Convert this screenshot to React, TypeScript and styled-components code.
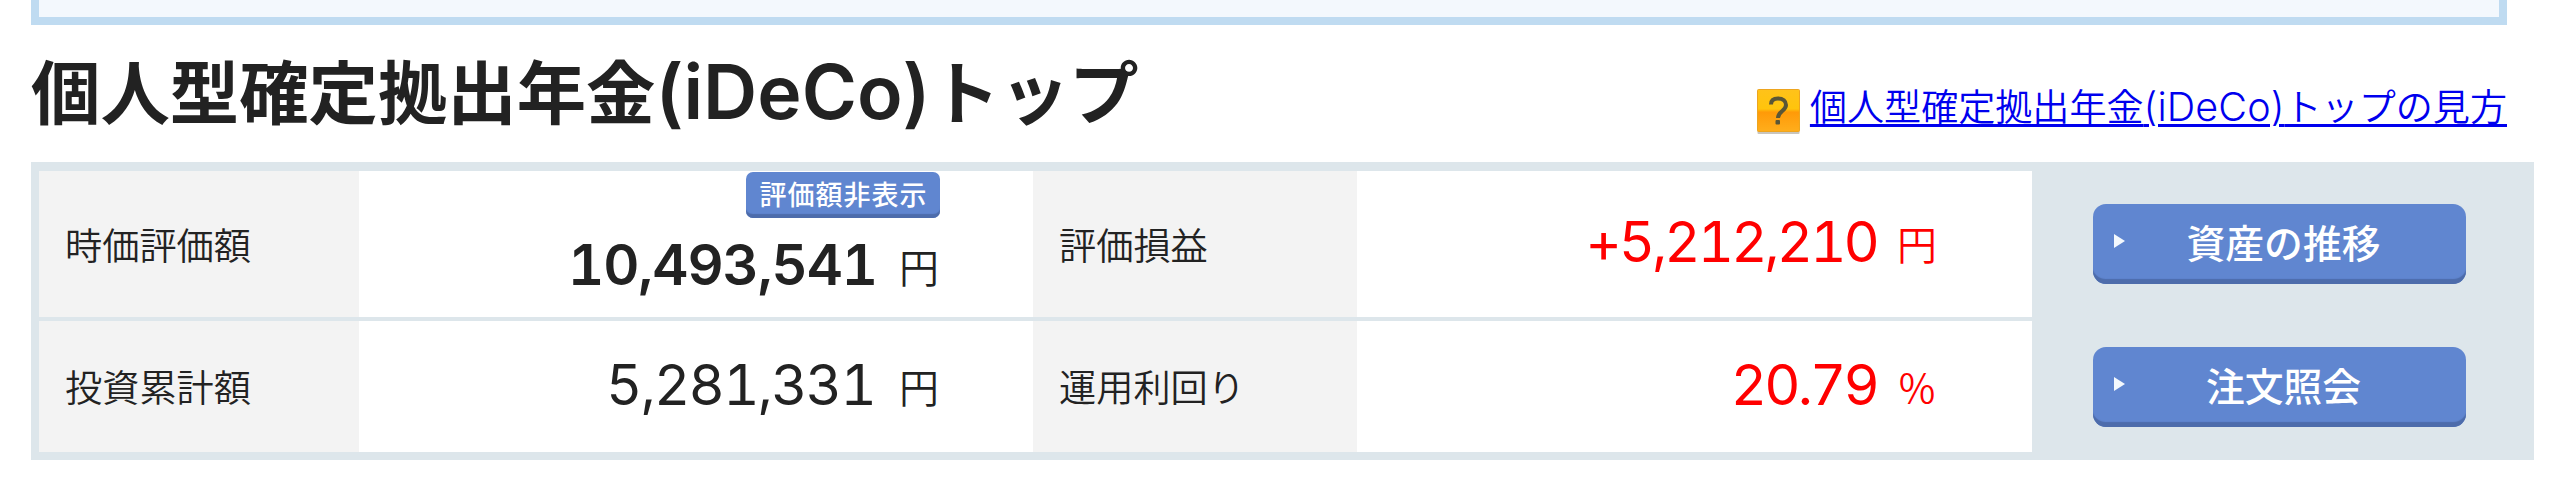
import React from "react";
import styled, { createGlobalStyle } from "styled-components";

const LATIN = `Inter, "Liberation Sans"`;
const JP = `"Noto Sans CJK JP", sans-serif`;
const JP_THIN = `"Noto Sans CJK JP DemiLight", "Noto Sans CJK JP", sans-serif`;

const GlobalStyle = createGlobalStyle`
  *, *::before, *::after { box-sizing: border-box; }
  body { margin: 0; background: #fff; color: #222; font-family: ${JP}; overflow: hidden; }
`;

const Page = styled.main`
  width: 2560px;
  height: 484px;
  padding-left: 31px;
`;

const NoticeBox = styled.div`
  width: 2476px;
  height: 25px;
  border: 8px solid #bfdbf1;
  border-top: 0;
  background: #f3f8fd;
`;

const Header = styled.header`
  display: flex;
  align-items: baseline;
  justify-content: space-between;
  width: 2476px;
  height: 137px;
  padding-top: 24px;
`;

const Title = styled.h1`
  margin: 0;
  font-size: 69.4px;
  font-weight: 700;
  line-height: 80px;
  white-space: nowrap;
`;

const Latin = styled.span<{ $size: number; $weight: number; $spacing?: number }>`
  font-family: ${LATIN}, ${JP};
  font-size: ${(p) => p.$size}px;
  font-weight: ${(p) => p.$weight};
  letter-spacing: ${(p) => p.$spacing ?? 0}px;
  line-height: 0;
`;

const Help = styled.div`
  display: flex;
  align-items: baseline;
  gap: 10px;
`;

const HelpIcon = styled.svg`
  width: 43px;
  height: 45px;
  transform: translateY(15px);
`;

const HelpLink = styled.a`
  color: #0000ee;
  font-family: ${JP_THIN};
  font-size: 37.1px;
  font-weight: 350;
  line-height: 50px;
  white-space: nowrap;
  text-decoration: underline;
  text-decoration-thickness: 3px;
  text-underline-offset: 3px;
  transform: translateY(2px);
`;

const Summary = styled.section`
  display: flex;
  width: 2503px;
  height: 298px;
  padding: 9px 0 8px 8px;
  background: #dde6eb;
`;

const Grid = styled.div`
  display: grid;
  grid-template-columns: 320px 674px 324px 675px;
  grid-template-rows: 146px 131px;
  row-gap: 4px;
`;

const Label = styled.div`
  display: flex;
  align-items: center;
  padding: 0 0 1px 26px;
  background: #f3f3f3;
  font-family: ${JP_THIN};
  font-size: 37.2px;
  font-weight: 350;
  line-height: 50px;
`;

const Cell = styled.div<{ $right: number }>`
  display: flex;
  flex-direction: column;
  align-items: flex-end;
  justify-content: center;
  padding-right: ${(p) => p.$right}px;
  background: #fff;
`;

const Amount = styled.div<{ $gain?: boolean; $shift?: number }>`
  display: flex;
  align-items: baseline;
  color: ${(p) => (p.$gain ? "#ff0000" : "#222")};
  line-height: 60px;
  padding-bottom: ${(p) => p.$shift ?? 0}px;
`;

const Figure = styled.span<{ $bold?: boolean; $spacing: number }>`
  font-family: ${LATIN}, ${JP};
  font-size: 56px;
  font-weight: ${(p) => (p.$bold ? 600 : 400)};
  font-variant-numeric: tabular-nums;
  letter-spacing: ${(p) => p.$spacing}px;
`;

const Unit = styled.span<{ $gap: number }>`
  width: 40px;
  margin-left: ${(p) => p.$gap}px;
  font-family: ${JP_THIN};
  font-size: 40px;
  font-weight: 350;
  text-align: center;
  transform: translateY(-2px);
`;

const HideButton = styled.button`
  width: 194px;
  height: 46px;
  margin: 1px -1px 17px 0;
  padding: 0 0 2px 1px;
  border: 0;
  border-radius: 7px;
  background: #6086d0;
  box-shadow: inset 0 -5px 1px -1px #4d6cab;
  color: #fff;
  font: 500 27px/42px ${JP};
  letter-spacing: 1px;
`;

const Actions = styled.nav`
  display: flex;
  flex-direction: column;
  gap: 63px;
  padding: 33px 0 0 61px;
`;

const ActionButton = styled.button`
  display: flex;
  align-items: center;
  width: 373px;
  height: 80px;
  padding: 0 17px 6px 21px;
  border: 0;
  border-radius: 13px;
  background: #6086d0;
  box-shadow: inset 0 -6px 1px -1px #4d6cab;
  color: #fff;
  font: 500 38.8px/60px ${JP};
`;

const Arrow = styled.i`
  width: 11px;
  height: 14px;
  background: #f3f8fd;
  clip-path: polygon(0 0, 100% 50%, 0 100%);
`;

const ActionText = styled.span`
  flex: 1;
  padding-right: 7px;
  text-align: center;
`;

const QuestionIcon = () => (
  <HelpIcon viewBox="0 0 43 45" aria-hidden="true">
    <defs>
      <linearGradient id="amber" x1="0" y1="0" x2="0" y2="1">
        <stop offset="0" stopColor="#ffc21a" />
        <stop offset="0.46" stopColor="#ffc40c" />
        <stop offset="0.54" stopColor="#ff9a08" />
        <stop offset="1" stopColor="#ffae1c" />
      </linearGradient>
    </defs>
    <rect x="0.5" y="3" width="42" height="42" rx="1" fill="#c9c5bd" />
    <rect x="0.5" y="0.5" width="42" height="42" rx="1" fill="url(#amber)" stroke="#eda51f" />
    <path d="M14 15.5C14 11 17 9.500 21 9.500c5 0 8 2.500 8 6.500 0 6-8 6-8 13" fill="none" stroke="#5a5637" strokeWidth="4" />
    <rect x="18.500" y="31" width="4.500" height="4.500" rx="1" fill="#5a5637" />
  </HelpIcon>
);

export default function App() {
  return (
    <>
      <GlobalStyle />
      <Page>
        <NoticeBox />
        <Header>
          <Title>
            個人型確定拠出年金<Latin $size={75} $weight={600}>(iDeCo)</Latin>トップ
          </Title>
          <Help>
            <QuestionIcon />
            <HelpLink href="#">
              個人型確定拠出年金<Latin $size={39.5} $weight={300} $spacing={0.1}>(iDeCo)</Latin>トップの見方
            </HelpLink>
          </Help>
        </Header>
        <Summary>
          <Grid>
            <Label>時価評価額</Label>
            <Cell $right={94}>
              <HideButton>評価額非表示</HideButton>
              <Amount $shift={19}>
                <Figure $bold $spacing={-1.1}>10,493,541</Figure>
                <Unit $gap={22}>円</Unit>
              </Amount>
            </Cell>
            <Label>評価損益</Label>
            <Cell $right={95}>
              <Amount $gain $shift={1}>
                <Figure $spacing={-2.9}>+5,212,210</Figure>
                <Unit $gap={20}>円</Unit>
              </Amount>
            </Cell>
            <Label>投資累計額</Label>
            <Cell $right={94}>
              <Amount>
                <Figure $spacing={-1.7}>5,281,331</Figure>
                <Unit $gap={24}>円</Unit>
              </Amount>
            </Cell>
            <Label>運用利回り</Label>
            <Cell $right={95}>
              <Amount $gain>
                <Figure $spacing={-2.8}>20.79</Figure>
                <Unit $gap={20}>%</Unit>
              </Amount>
            </Cell>
          </Grid>
          <Actions>
            <ActionButton>
              <Arrow />
              <ActionText>資産の推移</ActionText>
            </ActionButton>
            <ActionButton>
              <Arrow />
              <ActionText>注文照会</ActionText>
            </ActionButton>
          </Actions>
        </Summary>
      </Page>
    </>
  );
}
